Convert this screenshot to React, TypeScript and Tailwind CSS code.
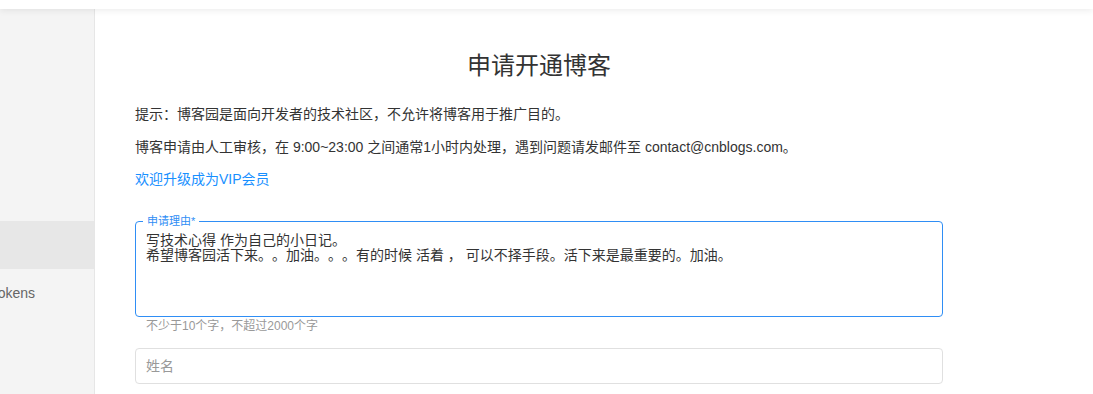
import React from "react";

export default function App() {
  return (
    <div className="w-[1093px] h-[394px] overflow-hidden bg-white font-['Liberation_Sans','Noto_Sans_CJK_SC',sans-serif] text-[#333] [text-spacing-trim:space-all]">
      <div className="relative z-10 h-[9px] bg-white shadow-[0_2px_6px_rgba(0,0,0,0.07)]" />
      <div className="flex h-[385px]">
        <aside className="w-[95px] shrink-0 overflow-hidden bg-[#f4f4f4] border-r border-[#e6e6e6] pt-[212px]">
          <div className="h-[48px] bg-[#e7e7e7]" />
          <div className="h-[48px] flex items-center whitespace-nowrap text-[14px] text-[#666]">
            <span className="ml-[-58px]">Access Tokens</span>
          </div>
        </aside>
        <main className="flex-1 pl-[40px]">
          <div className="w-[808px]">
            <h1 className="mt-[41px] text-center text-[24px] leading-[32px] text-[#333]">申请开通博客</h1>
            <p className="mt-[21px] text-[14px] leading-[22px]">提示：博客园是面向开发者的技术社区，不允许将博客用于推广目的。</p>
            <p className="mt-[11px] text-[14px] leading-[22px]">博客申请由人工审核，在 9:00~23:00 之间通常1小时内处理，遇到问题请发邮件至 contact@cnblogs.com。</p>
            <p className="mt-[10px] text-[14px] leading-[22px] text-[#1890ff]">欢迎升级成为VIP会员</p>
            <div className="relative mt-[31px] h-[96px] rounded-[4px] border border-[#2f8ef5]">
              <span className="absolute left-[7px] top-[-8px] bg-white px-[4px] text-[11px] leading-[14px] text-[#2f8ef5]">申请理由*</span>
              <textarea
                readOnly
                className="block h-full w-full resize-none bg-transparent px-[10px] pt-[11px] text-[14px] leading-[15px] text-[#333] outline-none [text-spacing-trim:space-all]"
                defaultValue={"写技术心得 作为自己的小日记。\n希望博客园活下来。。加油。。。有的时候 活着 ， 可以不择手段。活下来是最重要的。加油。"}
              />
            </div>
            <div className="pl-[11px] text-[12px] leading-[18px] text-[#999]">不少于10个字，不超过2000个字</div>
            <div className="mt-[13px] flex h-[36px] items-center rounded-[4px] border border-[#e0e0e0] px-[10px] text-[14px] text-[#999]">
              姓名
            </div>
          </div>
        </main>
      </div>
    </div>
  );
}
